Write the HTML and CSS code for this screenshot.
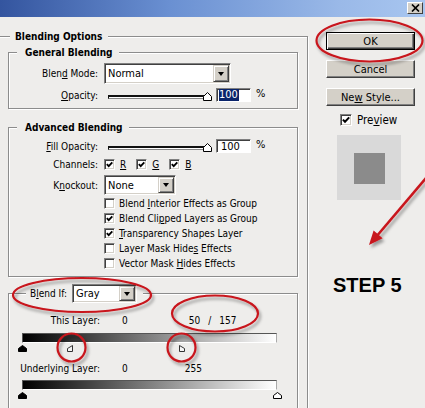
FILE: index.html
```html
<!DOCTYPE html>
<html lang="en">
<head>
    <meta charset="UTF-8">
    <meta name="viewport" content="width=device-width, initial-scale=1.0">
    <title>Layer Style</title>
    <link rel="stylesheet" href="styles.css">
</head>
<body>
    <div class="titlebar">
        <span class="close-btn"><svg width="9" height="8" viewBox="0 0 9 8"><path d="M1 0.5 L8 7.5 M8 0.5 L1 7.5" stroke="#000" stroke-width="1.7"/></svg></span>
    </div>

    <div class="content">
        <fieldset class="group outer">
            <legend class="title outer-title">Blending Options</legend>

            <fieldset class="group general">
                <legend class="title sub-title">General Blending</legend>
                <div class="row mode-row">
                    <span class="lbl">Blen<u>d</u> Mode:</span>
                    <span class="select mode-select"><span class="val">Normal</span><span class="drop"></span></span>
                </div>
                <div class="row opacity-row">
                    <span class="lbl"><u>O</u>pacity:</span>
                    <span class="slider">
                        <span class="track"></span>
                        <svg class="knob" width="9" height="9" viewBox="0 0 9 9"><polygon points="4.5,0.5 8.5,4.5 8.5,8.5 0.5,8.5 0.5,4.5" fill="#fff" stroke="#000"/></svg>
                    </span>
                    <span class="num"><span class="sel">100</span></span>
                    <span class="pct">%</span>
                </div>
            </fieldset>

            <fieldset class="group advanced">
                <legend class="title sub-title">Advanced Blending</legend>
                <div class="row opacity-row fill-row">
                    <span class="lbl"><u>F</u>ill Opacity:</span>
                    <span class="slider">
                        <span class="track"></span>
                        <svg class="knob" width="9" height="9" viewBox="0 0 9 9"><polygon points="4.5,0.5 8.5,4.5 8.5,8.5 0.5,8.5 0.5,4.5" fill="#fff" stroke="#000"/></svg>
                    </span>
                    <span class="num plain">100</span>
                    <span class="pct">%</span>
                </div>
                <div class="row channels-row">
                    <span class="lbl">Channels:</span>
                    <span class="channel"><span class="chk"><svg width="7" height="7" viewBox="0 0 7 7"><polyline points="0.8,3.2 2.7,5.2 6.3,1.3" fill="none" stroke="#000" stroke-width="1.8"/></svg></span><u>R</u></span>
                    <span class="channel"><span class="chk"><svg width="7" height="7" viewBox="0 0 7 7"><polyline points="0.8,3.2 2.7,5.2 6.3,1.3" fill="none" stroke="#000" stroke-width="1.8"/></svg></span><u>G</u></span>
                    <span class="channel"><span class="chk"><svg width="7" height="7" viewBox="0 0 7 7"><polyline points="0.8,3.2 2.7,5.2 6.3,1.3" fill="none" stroke="#000" stroke-width="1.8"/></svg></span><u>B</u></span>
                </div>
                <div class="row knock-row">
                    <span class="lbl">K<u>n</u>ockout:</span>
                    <span class="select knock-select"><span class="val">None</span><span class="drop"></span></span>
                </div>
                <ul class="options">
                    <li><span class="chk"></span><span>Blend <u>I</u>nterior Effects as Group</span></li>
                    <li><span class="chk"><svg width="7" height="7" viewBox="0 0 7 7"><polyline points="0.8,3.2 2.7,5.2 6.3,1.3" fill="none" stroke="#000" stroke-width="1.8"/></svg></span><span>Blend Cli<u>p</u>ped Layers as Group</span></li>
                    <li><span class="chk"><svg width="7" height="7" viewBox="0 0 7 7"><polyline points="0.8,3.2 2.7,5.2 6.3,1.3" fill="none" stroke="#000" stroke-width="1.8"/></svg></span><span><u>T</u>ransparency Shapes Layer</span></li>
                    <li><span class="chk"></span><span>Layer Mask Hide<u>s</u> Effects</span></li>
                    <li><span class="chk"></span><span>Vector Mask <u>H</u>ides Effects</span></li>
                </ul>
            </fieldset>

            <fieldset class="group blendif">
                <legend class="if-legend">
                    <span>B<u>l</u>end If:</span>
                    <span class="select if-select"><span class="val">Gray</span><span class="drop"></span></span>
                </legend>

                <div class="layer-row">
                    <span class="lbl">This Layer:</span>
                    <span class="zero">0</span>
                    <span class="hi split"><span>50</span><span>/</span><span>157</span></span>
                </div>
                <div class="bar-wrap">
                    <div class="bar"></div>
                    <svg class="thumb" style="left:-4px" width="9" height="7" viewBox="0 0 9 7"><polygon points="4.5,0.5 8.5,3.5 8.5,6.5 0.5,6.5 0.5,3.5" fill="#000" stroke="#000"/></svg>
                    <svg class="thumb" style="left:45px" width="6" height="7" viewBox="0 0 6 7"><polygon points="5.5,0.5 5.5,6.5 0.5,6.5 0.5,3.5" fill="#f4f4f4" stroke="#333"/></svg>
                    <svg class="thumb" style="left:157px" width="6" height="7" viewBox="0 0 6 7"><polygon points="0.5,0.5 5.5,3.5 5.5,6.5 0.5,6.5" fill="#f4f4f4" stroke="#333"/></svg>
                </div>

                <div class="layer-row under-row">
                    <span class="lbl">Underlying Layer:</span>
                    <span class="zero">0</span>
                    <span class="hi">255</span>
                </div>
                <div class="bar-wrap under-bar">
                    <div class="bar"></div>
                    <svg class="thumb" style="left:-4px" width="9" height="7" viewBox="0 0 9 7"><polygon points="4.5,0.5 8.5,3.5 8.5,6.5 0.5,6.5 0.5,3.5" fill="#000" stroke="#000"/></svg>
                    <svg class="thumb" style="left:251px" width="9" height="7" viewBox="0 0 9 7"><polygon points="4.5,0.5 8.5,3.5 8.5,6.5 0.5,6.5 0.5,3.5" fill="#fff" stroke="#000"/></svg>
                </div>
            </fieldset>
        </fieldset>

        <div class="side">
            <div class="btn default"><span>OK</span></div>
            <div class="btn"><span>Cancel</span></div>
            <div class="btn"><span>Ne<u>w</u> Style...</span></div>
            <div class="preview">
                <span class="chk big"><svg width="8" height="8" viewBox="0 0 8 8"><polyline points="0.9,3.6 3,5.8 7.2,1.4" fill="none" stroke="#000" stroke-width="2"/></svg></span>
                <span>Pre<u>v</u>iew</span>
            </div>
            <div class="thumbnail"><span></span></div>
            <div class="step">STEP 5</div>
        </div>
    </div>

    <svg class="marks" width="425" height="408" viewBox="0 0 425 408">
        <defs>
            <filter id="shadow" x="-20%" y="-30%" width="150%" height="170%">
                <feDropShadow dx="2" dy="3" stdDeviation="1.6" flood-color="#000" flood-opacity="0.35"/>
            </filter>
        </defs>
        <g fill="none" stroke="#c8141c" stroke-width="2.2" filter="url(#shadow)">
            <ellipse cx="369.5" cy="40.5" rx="53" ry="21"/>
            <ellipse cx="82" cy="295" rx="69" ry="17"/>
            <ellipse cx="215" cy="313.5" rx="43" ry="18"/>
            <circle cx="71.5" cy="347.5" r="14"/>
            <circle cx="181.5" cy="347.5" r="14"/>
            <line x1="432" y1="171" x2="376" y2="237" stroke-width="2.6"/>
            <polygon points="369,245 373.6,230.5 382.6,238.3" fill="#c8141c" stroke="none"/>
        </g>
    </svg>
</body>
</html>
```

FILE: styles.css
```css
* {
    box-sizing: border-box;
}

body {
    position: relative;
    margin: 0;
    width: 425px;
    height: 408px;
    overflow: hidden;
    background: #eeedeb;
    font-family: "DejaVu Sans Condensed", "Liberation Sans", sans-serif;
    font-size: 10px;
    color: #000;
}

.titlebar {
    height: 17px;
    display: flex;
    justify-content: flex-end;
    align-items: flex-start;
    padding: 2px 2px 0 0;
    background: linear-gradient(to right, #34559f 0%, #6a90d2 40%, #9ab9e8 80%, #a8c6f0 100%);
}

.close-btn {
    width: 16px;
    height: 12px;
    display: flex;
    align-items: center;
    justify-content: center;
    background: #d4d0c8;
    border: 1px solid;
    border-color: #fff #404040 #404040 #fff;
}

.content {
    display: flex;
    align-items: flex-start;
}

/* group boxes */
.group {
    margin: 0;
    padding: 0;
    min-width: 0;
    border: 1px solid #8c8c8c;
    box-shadow: inset 1px 1px 0 #fff, 1px 1px 0 #fff;
}

.outer {
    flex: none;
    width: 311px;
    margin: 12px 0 0 -3px;
    padding: 0 9px 0 10px;
}

.title {
    font-weight: bold;
    line-height: 15px;
    background: #eeedeb;
}

.outer-title {
    margin-left: 2px;
    padding: 0 6px 0 5px;
}

.sub-title {
    margin-left: 8px;
    padding: 0 6px 0 8px;
}

.general {
    margin-top: 1px;
    padding-bottom: 6px;
}

.advanced {
    margin-top: 11px;
    padding-bottom: 5px;
}

.blendif {
    margin-top: 7px;
    padding-bottom: 12px;
}

/* form rows */
.row {
    display: flex;
    align-items: center;
}

.lbl {
    flex: none;
    width: 89px;
    margin-right: 6px;
    text-align: right;
}

.mode-row {
    margin-top: 3px;
    height: 21px;
}

.select {
    flex: none;
    display: flex;
    height: 21px;
    padding: 1px;
    background: #fff;
    border: 1px solid;
    border-color: #808080 #fff #fff #808080;
    box-shadow: inset 1px 1px 0 #404040, inset -1px -1px 0 #d4d0c8;
}

.select .val {
    flex: 1;
    display: flex;
    align-items: center;
    padding-left: 2px;
    font-size: 11px;
}

.drop {
    flex: none;
    width: 16px;
    display: flex;
    align-items: center;
    justify-content: center;
    background: #d4d0c8;
    border: 1px solid;
    border-color: #d4d0c8 #404040 #404040 #d4d0c8;
    box-shadow: inset 1px 1px 0 #fff, inset -1px -1px 0 #808080;
}

.drop::after {
    content: "";
    border-left: 3.5px solid transparent;
    border-right: 3.5px solid transparent;
    border-top: 4px solid #000;
}

.mode-select {
    width: 127px;
}

.opacity-row {
    margin-top: 4px;
    height: 14px;
}

.slider {
    position: relative;
    flex: none;
    width: 104px;
    height: 14px;
    margin-left: 4px;
    display: flex;
    align-items: center;
}

.track {
    width: 99px;
    height: 4px;
    margin-top: 3px;
    background: #fff;
    border-top: 2px solid #111;
    border-left: 1px solid #111;
    border-bottom: 1px solid #888;
}

.knob {
    position: absolute;
    left: 95px;
    top: 4px;
}

.num {
    flex: none;
    width: 35px;
    height: 14px;
    margin-left: 4px;
    display: flex;
    align-items: center;
    padding-left: 2px;
    background: #fff;
    border: 1px solid;
    border-color: #808080 #fff #fff #808080;
    box-shadow: inset 1px 1px 0 #404040;
    font-size: 11px;
}

.num.plain {
    padding-left: 4px;
}

.sel {
    background: #0a246a;
    color: #fff;
    line-height: 12px;
    padding-right: 1px;
}

.pct {
    margin-left: 5px;
    font-size: 11px;
    margin-top: -3px;
}

.fill-row {
    margin-top: 4px;
}

.channels-row {
    margin-top: 5px;
    height: 12px;
}

.channel {
    display: inline-flex;
    align-items: center;
    gap: 5px;
    margin-right: 10px;
}

.chk {
    flex: none;
    width: 11px;
    height: 11px;
    display: flex;
    align-items: center;
    justify-content: center;
    background: #fff;
    border: 1px solid;
    border-color: #808080 #fff #fff #808080;
    box-shadow: inset 1px 1px 0 #404040, inset -1px -1px 0 #d4d0c8;
}

.knock-row {
    margin-top: 5px;
    height: 20px;
}

.knock-select {
    width: 72px;
    height: 20px;
}

.options {
    list-style: none;
    margin: 1px 0 0 95px;
    padding: 0;
}

.options li {
    height: 15px;
    display: flex;
    align-items: center;
    gap: 4px;
}

/* blend if */
.if-legend {
    display: flex;
    align-items: center;
    gap: 5px;
    height: 19px;
    margin-left: 17px;
    padding: 0 6px 0 4px;
    background: #eeedeb;
}

.if-select {
    width: 65px;
    height: 19px;
}

.layer-row {
    display: flex;
    align-items: center;
    height: 12px;
    margin-top: 11px;
}

.layer-row .lbl {
    width: 91px;
    margin-right: 0;
}

.zero {
    margin-left: 22px;
}

.hi {
    margin-left: 57px;
}

.split {
    display: flex;
    gap: 8px;
    margin-left: 61px;
}

.bar-wrap {
    position: relative;
    width: 255px;
    height: 20px;
    margin: 7px 0 0 13px;
}

.bar {
    height: 10px;
    background: linear-gradient(to right, #000, #fff);
    border-top: 1px solid #555;
    border-left: 1px solid #555;
    border-right: 1px solid #aaa;
    border-bottom: 1px solid #fff;
}

.thumb {
    position: absolute;
    top: 12px;
}

.under-row {
    margin-top: 9px;
}

.under-bar {
    margin-top: 6px;
}

/* right column */
.side {
    flex: none;
    width: 89px;
    margin-left: 18px;
    padding-top: 15px;
    display: flex;
    flex-direction: column;
}

.btn {
    height: 18px;
    display: flex;
    align-items: center;
    justify-content: center;
    font-size: 11px;
    background: #d4d0c8;
    border: 1px solid;
    border-color: #fff #404040 #404040 #fff;
    box-shadow: inset -1px -1px 0 #808080;
}

.btn.default {
    border-color: #000;
    box-shadow: inset 1px 1px 0 #fff, inset -1px -1px 0 #404040, inset -2px -2px 0 #808080;
}

.btn + .btn {
    margin-top: 10px;
}

.preview {
    display: flex;
    align-items: center;
    gap: 5px;
    height: 12px;
    margin: 8px 0 0 14px;
    font-size: 11.5px;
}

.chk.big {
    width: 12px;
    height: 12px;
}

.thumbnail {
    width: 64px;
    height: 65px;
    margin: 9px 0 0 11px;
    padding: 18px 16px 16px 17px;
    background: #d9d9d9;
}

.thumbnail span {
    display: block;
    width: 31px;
    height: 31px;
    background: #8b8b8b;
}

.step {
    margin: 75px 0 0 7px;
    font: bold 20px/20px "Liberation Sans", Arial, sans-serif;
}

.marks {
    position: absolute;
    left: 0;
    top: 0;
    pointer-events: none;
}
```
